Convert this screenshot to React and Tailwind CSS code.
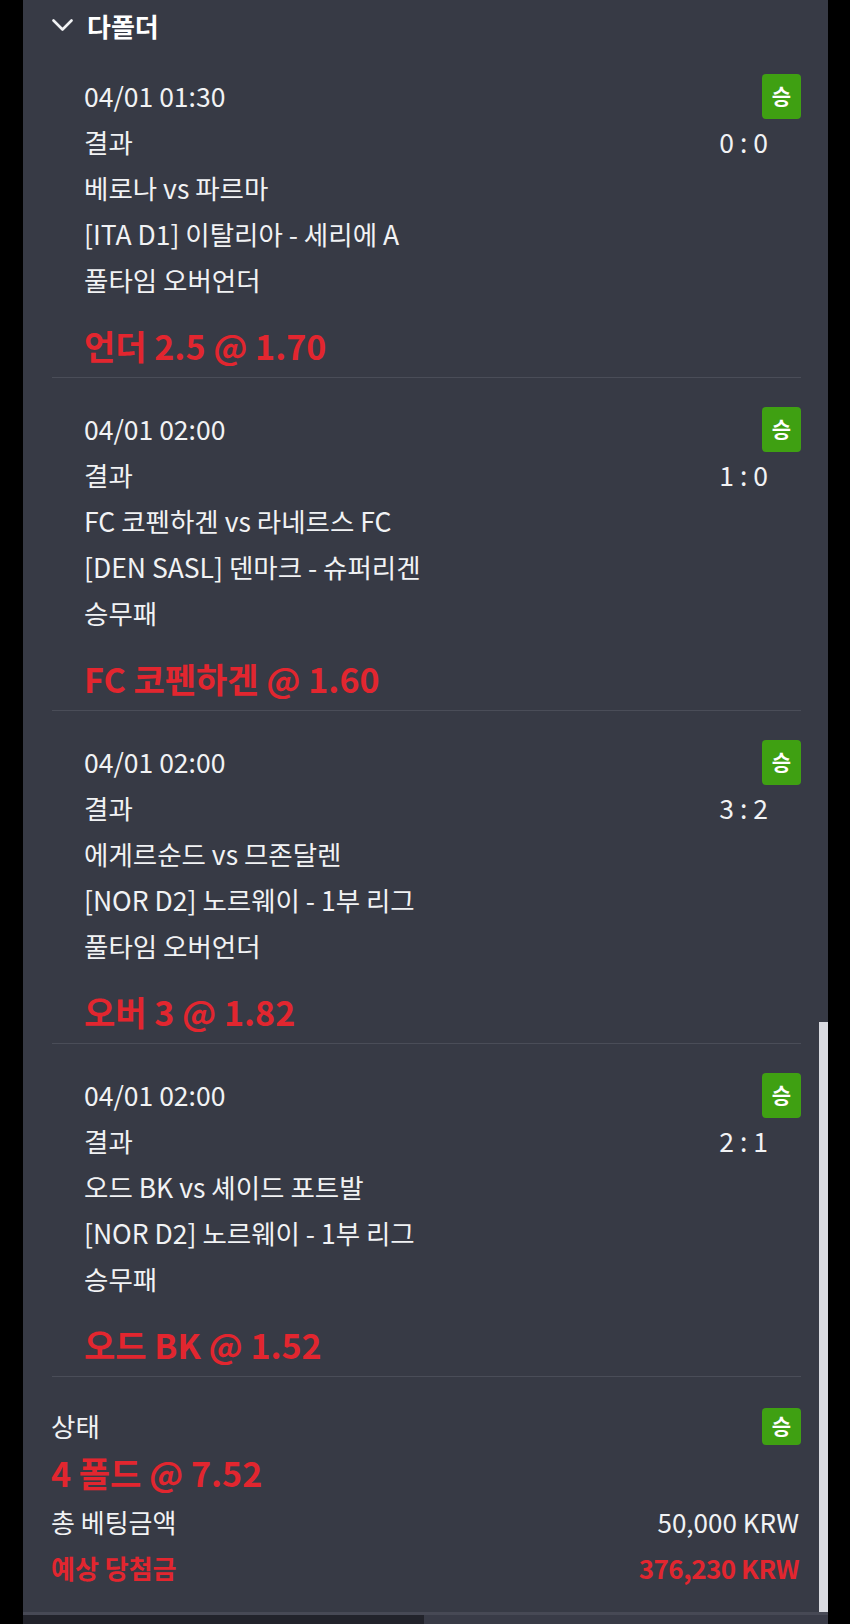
import React from 'react';

const bets = [
  {
    date: '04/01 01:30',
    score: '0 : 0',
    teams: '베로나 vs 파르마',
    league: '[ITA D1] 이탈리아 - 세리에 A',
    market: '풀타임 오버언더',
    pick: '언더 2.5 @ 1.70',
  },
  {
    date: '04/01 02:00',
    score: '1 : 0',
    teams: 'FC 코펜하겐 vs 라네르스 FC',
    league: '[DEN SASL] 덴마크 - 슈퍼리겐',
    market: '승무패',
    pick: 'FC 코펜하겐 @ 1.60',
  },
  {
    date: '04/01 02:00',
    score: '3 : 2',
    teams: '에게르순드 vs 므존달렌',
    league: '[NOR D2] 노르웨이 - 1부 리그',
    market: '풀타임 오버언더',
    pick: '오버 3 @ 1.82',
  },
  {
    date: '04/01 02:00',
    score: '2 : 1',
    teams: '오드 BK vs 셰이드 포트발',
    league: '[NOR D2] 노르웨이 - 1부 리그',
    market: '승무패',
    pick: '오드 BK @ 1.52',
  },
];

const WinBadge = ({ tall }) => (
  <div
    className={`w-[39px] ${tall ? 'h-[45px]' : 'h-[37px]'} rounded-[4px] bg-[#3fa012] flex items-center justify-center text-white font-bold text-[21px]`}
  >
    승
  </div>
);

const BetItem = ({ bet, first }) => (
  <div className={`${first ? 'pt-[22px]' : 'pt-[28px]'} pb-[9px] border-b border-[#4a4d58]`}>
    <div className="pl-[32px]">
      <div className="h-[46px] flex items-center justify-between">
        <span>{bet.date}</span>
        <WinBadge tall />
      </div>
      <div className="h-[46px] flex items-center justify-between">
        <span>결과</span>
        <span className="mr-[33px]">{bet.score}</span>
      </div>
      <div className="h-[46px] flex items-center">{bet.teams}</div>
      <div className="h-[46px] flex items-center">{bet.league}</div>
      <div className="h-[46px] flex items-center">{bet.market}</div>
      <div className="mt-[19px] h-[46px] flex items-center text-[#e2262f] font-bold text-[34px]">
        {bet.pick}
      </div>
    </div>
  </div>
);

export default function App() {
  return (
    <div
      className="w-[850px] h-[1624px] bg-black flex flex-col overflow-hidden text-[#f1f2f4] text-[26.5px]"
      style={{ fontFamily: '"Noto Sans CJK KR", "Noto Sans", sans-serif' }}
    >
      <div className="flex-1 flex">
        <div className="ml-[23px] w-[805px] bg-[#373a45] relative flex flex-col">
          <div className="h-[51px] flex items-center pl-[29px] gap-[14px]">
            <svg width="21" height="13" viewBox="0 0 21 13" fill="none">
              <polyline points="1.5,1.5 10.5,10.5 19.5,1.5" stroke="#f1f2f4" strokeWidth="2.6" strokeLinecap="round" strokeLinejoin="round" />
            </svg>
            <span className="font-bold text-[26px] text-white">다폴더</span>
          </div>

          <div className="pl-[29px] pr-[27px]">
            {bets.map((b, i) => (
              <BetItem key={i} bet={b} first={i === 0} />
            ))}

            <div className="pt-[26px]">
              <div className="h-[46px] flex items-center justify-between -ml-[1px]">
                <span>상태</span>
                <WinBadge />
              </div>
              <div className="h-[46px] flex items-center -ml-[1px] text-[#e2262f] font-bold text-[34px]">
                4 폴드 @ 7.52
              </div>
              <div className="mt-[3px] h-[46px] flex items-center justify-between -ml-[1px] pr-[2px] text-[26px]">
                <span>총 베팅금액</span>
                <span>50,000 KRW</span>
              </div>
              <div className="h-[46px] flex items-center justify-between -ml-[1px] pr-[2px] text-[26px] text-[#e2262f] font-bold">
                <span>예상 당첨금</span>
                <span className="tracking-[-0.5px]">376,230 KRW</span>
              </div>
            </div>
          </div>

          <div className="absolute right-0 bottom-0 top-[1022px] w-[9px] bg-[#d9dae0]" />
        </div>
        <div className="w-[22px]" />
      </div>

      <div className="ml-[23px] w-[805px] h-[12px] flex flex-col">
        <div className="h-[3px] bg-[#474955]" />
        <div className="flex-1 flex">
          <div className="w-[401px] bg-[#22232b]" />
          <div className="flex-1 bg-[#393b47]" />
        </div>
      </div>
    </div>
  );
}
